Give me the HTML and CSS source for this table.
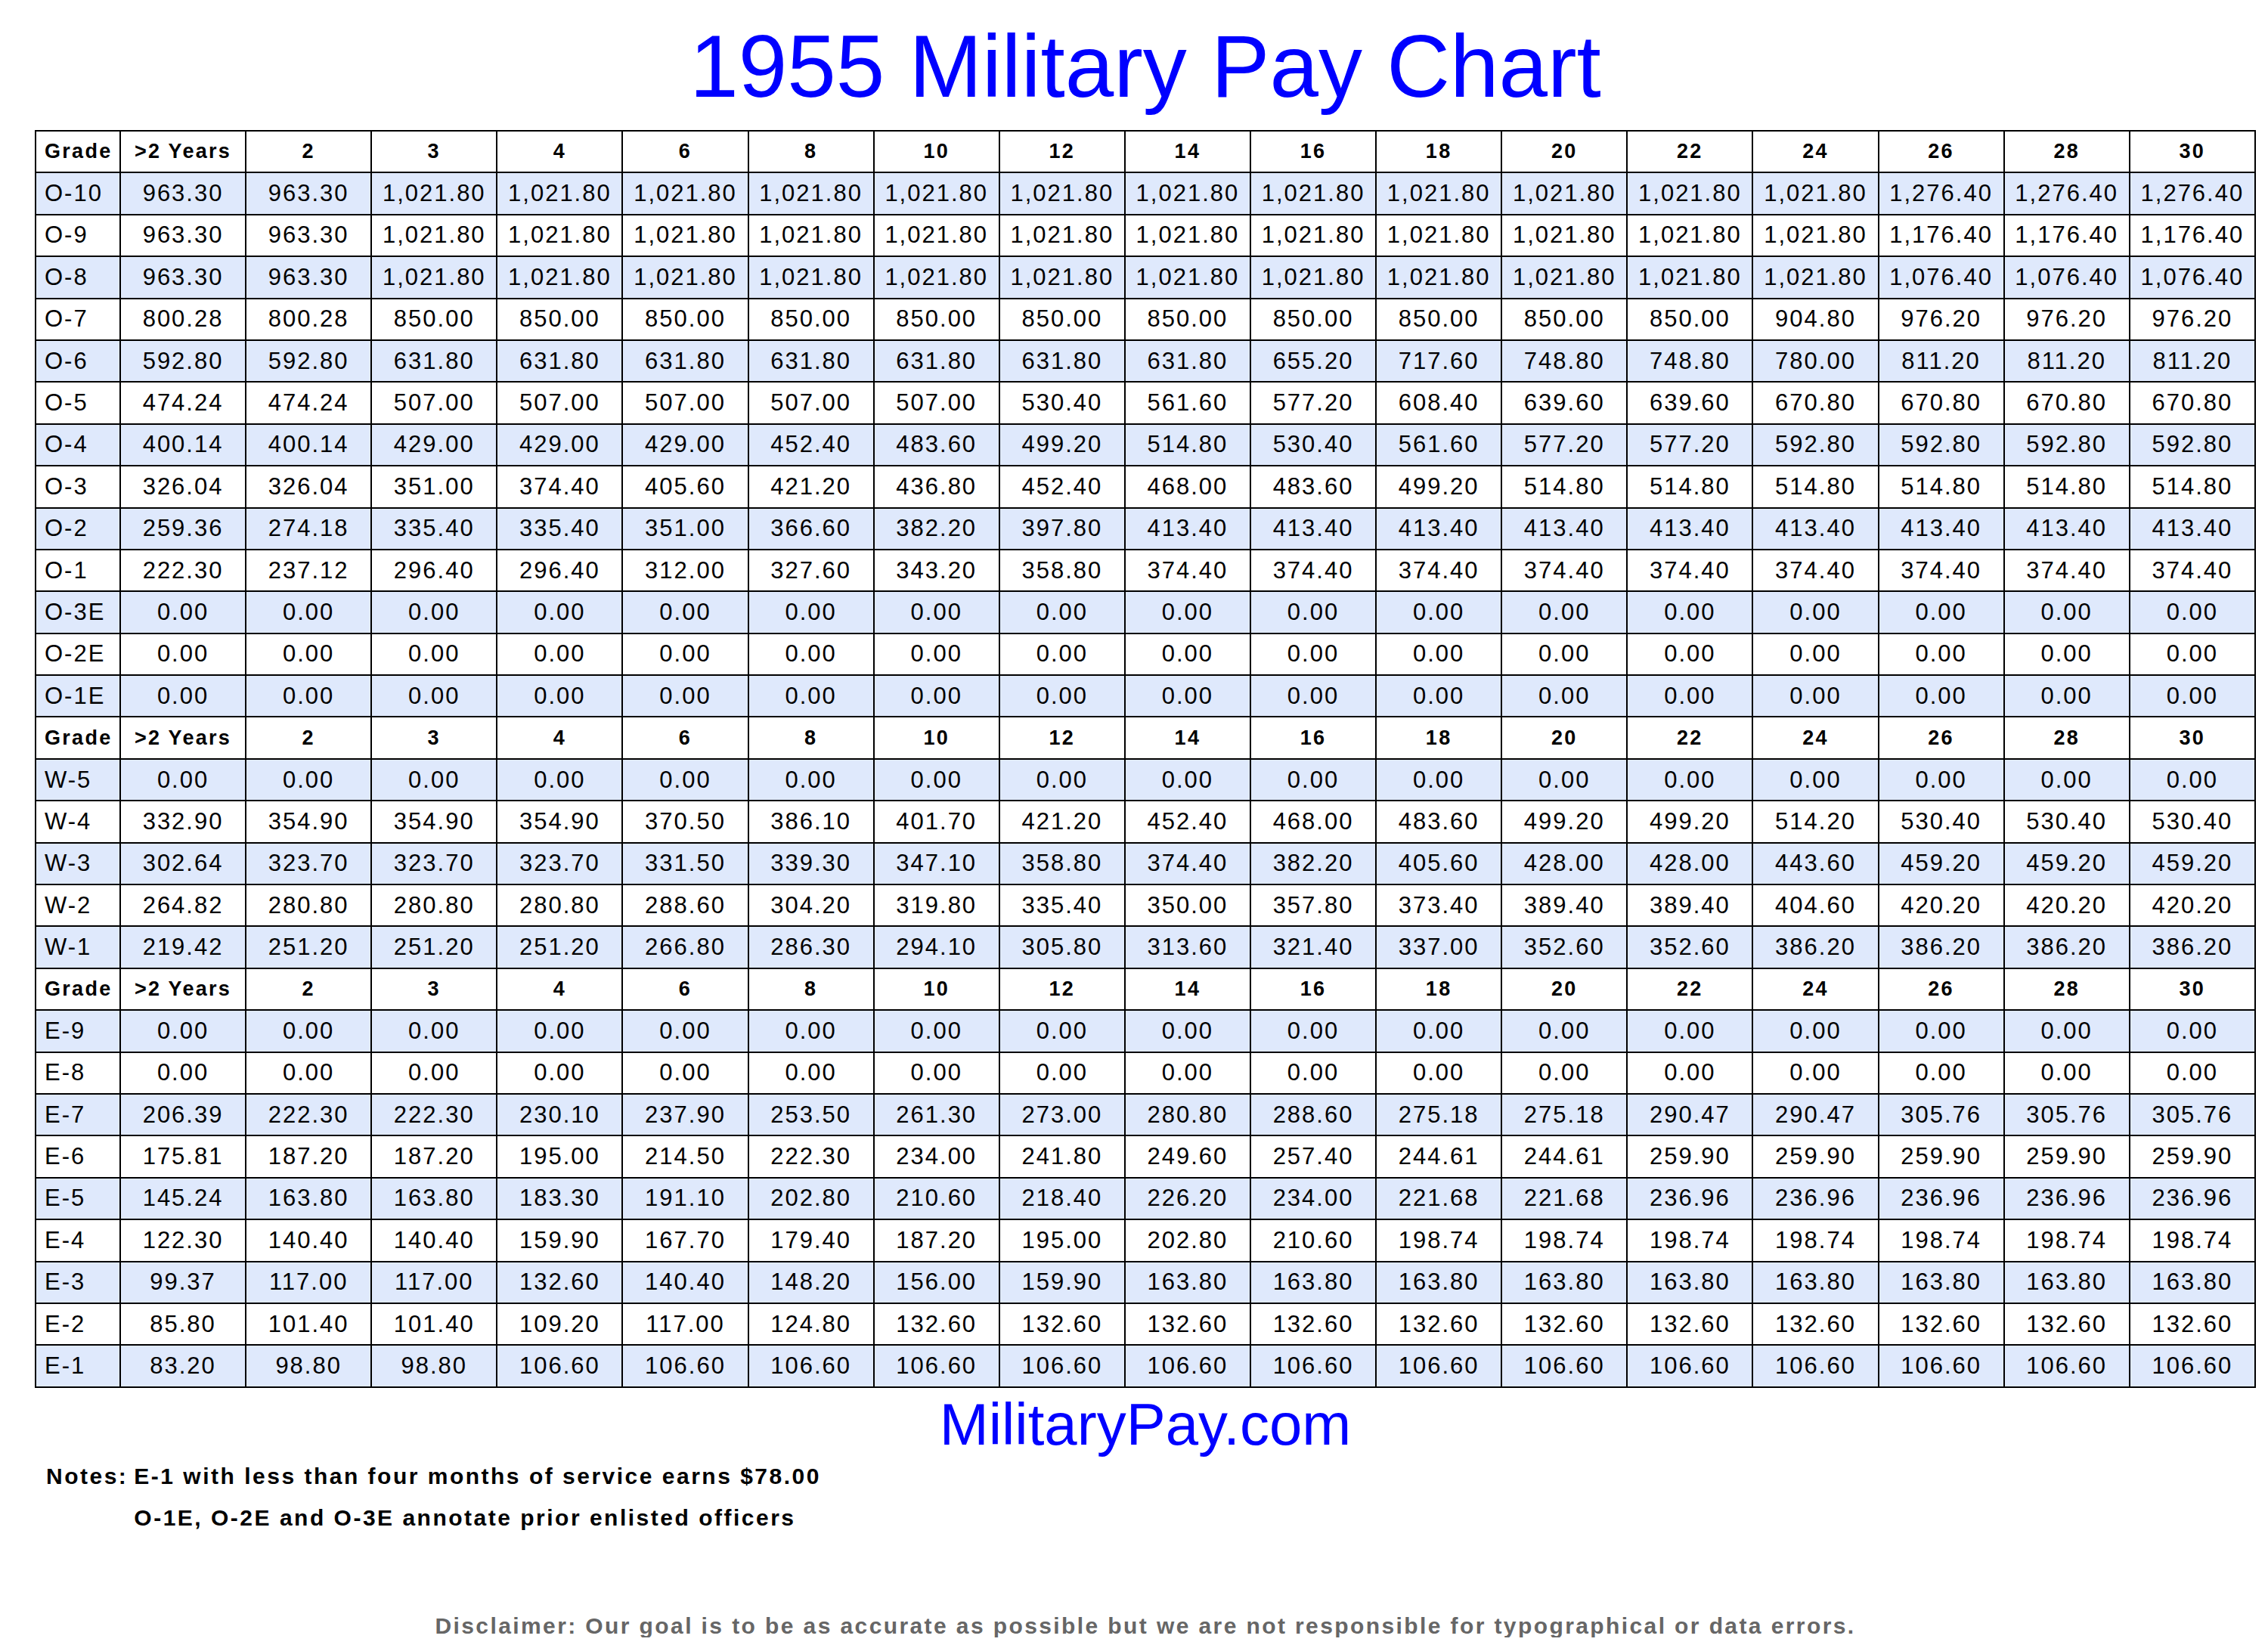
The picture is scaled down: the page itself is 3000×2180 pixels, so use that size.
FILE: index.html
```html
<!DOCTYPE html>
<html lang="en">
<head>
<meta charset="utf-8">
<title>1955 Military Pay Chart</title>
<link rel="stylesheet" href="styles.css">
</head>
<body>
<div class="page">
  <h1 class="title">1955 Military Pay Chart</h1>
  <table class="chart">
    <colgroup><col class="c-grade"><col span="17"></colgroup>
    <tbody>
      <tr class="head"><th>Grade</th><th>&gt;2 Years</th><th>2</th><th>3</th><th>4</th><th>6</th><th>8</th><th>10</th><th>12</th><th>14</th><th>16</th><th>18</th><th>20</th><th>22</th><th>24</th><th>26</th><th>28</th><th>30</th></tr>
      <tr><td>O-10</td><td>963.30</td><td>963.30</td><td>1,021.80</td><td>1,021.80</td><td>1,021.80</td><td>1,021.80</td><td>1,021.80</td><td>1,021.80</td><td>1,021.80</td><td>1,021.80</td><td>1,021.80</td><td>1,021.80</td><td>1,021.80</td><td>1,021.80</td><td>1,276.40</td><td>1,276.40</td><td>1,276.40</td></tr>
      <tr><td>O-9</td><td>963.30</td><td>963.30</td><td>1,021.80</td><td>1,021.80</td><td>1,021.80</td><td>1,021.80</td><td>1,021.80</td><td>1,021.80</td><td>1,021.80</td><td>1,021.80</td><td>1,021.80</td><td>1,021.80</td><td>1,021.80</td><td>1,021.80</td><td>1,176.40</td><td>1,176.40</td><td>1,176.40</td></tr>
      <tr><td>O-8</td><td>963.30</td><td>963.30</td><td>1,021.80</td><td>1,021.80</td><td>1,021.80</td><td>1,021.80</td><td>1,021.80</td><td>1,021.80</td><td>1,021.80</td><td>1,021.80</td><td>1,021.80</td><td>1,021.80</td><td>1,021.80</td><td>1,021.80</td><td>1,076.40</td><td>1,076.40</td><td>1,076.40</td></tr>
      <tr><td>O-7</td><td>800.28</td><td>800.28</td><td>850.00</td><td>850.00</td><td>850.00</td><td>850.00</td><td>850.00</td><td>850.00</td><td>850.00</td><td>850.00</td><td>850.00</td><td>850.00</td><td>850.00</td><td>904.80</td><td>976.20</td><td>976.20</td><td>976.20</td></tr>
      <tr><td>O-6</td><td>592.80</td><td>592.80</td><td>631.80</td><td>631.80</td><td>631.80</td><td>631.80</td><td>631.80</td><td>631.80</td><td>631.80</td><td>655.20</td><td>717.60</td><td>748.80</td><td>748.80</td><td>780.00</td><td>811.20</td><td>811.20</td><td>811.20</td></tr>
      <tr><td>O-5</td><td>474.24</td><td>474.24</td><td>507.00</td><td>507.00</td><td>507.00</td><td>507.00</td><td>507.00</td><td>530.40</td><td>561.60</td><td>577.20</td><td>608.40</td><td>639.60</td><td>639.60</td><td>670.80</td><td>670.80</td><td>670.80</td><td>670.80</td></tr>
      <tr><td>O-4</td><td>400.14</td><td>400.14</td><td>429.00</td><td>429.00</td><td>429.00</td><td>452.40</td><td>483.60</td><td>499.20</td><td>514.80</td><td>530.40</td><td>561.60</td><td>577.20</td><td>577.20</td><td>592.80</td><td>592.80</td><td>592.80</td><td>592.80</td></tr>
      <tr><td>O-3</td><td>326.04</td><td>326.04</td><td>351.00</td><td>374.40</td><td>405.60</td><td>421.20</td><td>436.80</td><td>452.40</td><td>468.00</td><td>483.60</td><td>499.20</td><td>514.80</td><td>514.80</td><td>514.80</td><td>514.80</td><td>514.80</td><td>514.80</td></tr>
      <tr><td>O-2</td><td>259.36</td><td>274.18</td><td>335.40</td><td>335.40</td><td>351.00</td><td>366.60</td><td>382.20</td><td>397.80</td><td>413.40</td><td>413.40</td><td>413.40</td><td>413.40</td><td>413.40</td><td>413.40</td><td>413.40</td><td>413.40</td><td>413.40</td></tr>
      <tr><td>O-1</td><td>222.30</td><td>237.12</td><td>296.40</td><td>296.40</td><td>312.00</td><td>327.60</td><td>343.20</td><td>358.80</td><td>374.40</td><td>374.40</td><td>374.40</td><td>374.40</td><td>374.40</td><td>374.40</td><td>374.40</td><td>374.40</td><td>374.40</td></tr>
      <tr><td>O-3E</td><td>0.00</td><td>0.00</td><td>0.00</td><td>0.00</td><td>0.00</td><td>0.00</td><td>0.00</td><td>0.00</td><td>0.00</td><td>0.00</td><td>0.00</td><td>0.00</td><td>0.00</td><td>0.00</td><td>0.00</td><td>0.00</td><td>0.00</td></tr>
      <tr><td>O-2E</td><td>0.00</td><td>0.00</td><td>0.00</td><td>0.00</td><td>0.00</td><td>0.00</td><td>0.00</td><td>0.00</td><td>0.00</td><td>0.00</td><td>0.00</td><td>0.00</td><td>0.00</td><td>0.00</td><td>0.00</td><td>0.00</td><td>0.00</td></tr>
      <tr><td>O-1E</td><td>0.00</td><td>0.00</td><td>0.00</td><td>0.00</td><td>0.00</td><td>0.00</td><td>0.00</td><td>0.00</td><td>0.00</td><td>0.00</td><td>0.00</td><td>0.00</td><td>0.00</td><td>0.00</td><td>0.00</td><td>0.00</td><td>0.00</td></tr>
    </tbody>
    <tbody>
      <tr class="head"><th>Grade</th><th>&gt;2 Years</th><th>2</th><th>3</th><th>4</th><th>6</th><th>8</th><th>10</th><th>12</th><th>14</th><th>16</th><th>18</th><th>20</th><th>22</th><th>24</th><th>26</th><th>28</th><th>30</th></tr>
      <tr><td>W-5</td><td>0.00</td><td>0.00</td><td>0.00</td><td>0.00</td><td>0.00</td><td>0.00</td><td>0.00</td><td>0.00</td><td>0.00</td><td>0.00</td><td>0.00</td><td>0.00</td><td>0.00</td><td>0.00</td><td>0.00</td><td>0.00</td><td>0.00</td></tr>
      <tr><td>W-4</td><td>332.90</td><td>354.90</td><td>354.90</td><td>354.90</td><td>370.50</td><td>386.10</td><td>401.70</td><td>421.20</td><td>452.40</td><td>468.00</td><td>483.60</td><td>499.20</td><td>499.20</td><td>514.20</td><td>530.40</td><td>530.40</td><td>530.40</td></tr>
      <tr><td>W-3</td><td>302.64</td><td>323.70</td><td>323.70</td><td>323.70</td><td>331.50</td><td>339.30</td><td>347.10</td><td>358.80</td><td>374.40</td><td>382.20</td><td>405.60</td><td>428.00</td><td>428.00</td><td>443.60</td><td>459.20</td><td>459.20</td><td>459.20</td></tr>
      <tr><td>W-2</td><td>264.82</td><td>280.80</td><td>280.80</td><td>280.80</td><td>288.60</td><td>304.20</td><td>319.80</td><td>335.40</td><td>350.00</td><td>357.80</td><td>373.40</td><td>389.40</td><td>389.40</td><td>404.60</td><td>420.20</td><td>420.20</td><td>420.20</td></tr>
      <tr><td>W-1</td><td>219.42</td><td>251.20</td><td>251.20</td><td>251.20</td><td>266.80</td><td>286.30</td><td>294.10</td><td>305.80</td><td>313.60</td><td>321.40</td><td>337.00</td><td>352.60</td><td>352.60</td><td>386.20</td><td>386.20</td><td>386.20</td><td>386.20</td></tr>
    </tbody>
    <tbody>
      <tr class="head"><th>Grade</th><th>&gt;2 Years</th><th>2</th><th>3</th><th>4</th><th>6</th><th>8</th><th>10</th><th>12</th><th>14</th><th>16</th><th>18</th><th>20</th><th>22</th><th>24</th><th>26</th><th>28</th><th>30</th></tr>
      <tr><td>E-9</td><td>0.00</td><td>0.00</td><td>0.00</td><td>0.00</td><td>0.00</td><td>0.00</td><td>0.00</td><td>0.00</td><td>0.00</td><td>0.00</td><td>0.00</td><td>0.00</td><td>0.00</td><td>0.00</td><td>0.00</td><td>0.00</td><td>0.00</td></tr>
      <tr><td>E-8</td><td>0.00</td><td>0.00</td><td>0.00</td><td>0.00</td><td>0.00</td><td>0.00</td><td>0.00</td><td>0.00</td><td>0.00</td><td>0.00</td><td>0.00</td><td>0.00</td><td>0.00</td><td>0.00</td><td>0.00</td><td>0.00</td><td>0.00</td></tr>
      <tr><td>E-7</td><td>206.39</td><td>222.30</td><td>222.30</td><td>230.10</td><td>237.90</td><td>253.50</td><td>261.30</td><td>273.00</td><td>280.80</td><td>288.60</td><td>275.18</td><td>275.18</td><td>290.47</td><td>290.47</td><td>305.76</td><td>305.76</td><td>305.76</td></tr>
      <tr><td>E-6</td><td>175.81</td><td>187.20</td><td>187.20</td><td>195.00</td><td>214.50</td><td>222.30</td><td>234.00</td><td>241.80</td><td>249.60</td><td>257.40</td><td>244.61</td><td>244.61</td><td>259.90</td><td>259.90</td><td>259.90</td><td>259.90</td><td>259.90</td></tr>
      <tr><td>E-5</td><td>145.24</td><td>163.80</td><td>163.80</td><td>183.30</td><td>191.10</td><td>202.80</td><td>210.60</td><td>218.40</td><td>226.20</td><td>234.00</td><td>221.68</td><td>221.68</td><td>236.96</td><td>236.96</td><td>236.96</td><td>236.96</td><td>236.96</td></tr>
      <tr><td>E-4</td><td>122.30</td><td>140.40</td><td>140.40</td><td>159.90</td><td>167.70</td><td>179.40</td><td>187.20</td><td>195.00</td><td>202.80</td><td>210.60</td><td>198.74</td><td>198.74</td><td>198.74</td><td>198.74</td><td>198.74</td><td>198.74</td><td>198.74</td></tr>
      <tr><td>E-3</td><td>99.37</td><td>117.00</td><td>117.00</td><td>132.60</td><td>140.40</td><td>148.20</td><td>156.00</td><td>159.90</td><td>163.80</td><td>163.80</td><td>163.80</td><td>163.80</td><td>163.80</td><td>163.80</td><td>163.80</td><td>163.80</td><td>163.80</td></tr>
      <tr><td>E-2</td><td>85.80</td><td>101.40</td><td>101.40</td><td>109.20</td><td>117.00</td><td>124.80</td><td>132.60</td><td>132.60</td><td>132.60</td><td>132.60</td><td>132.60</td><td>132.60</td><td>132.60</td><td>132.60</td><td>132.60</td><td>132.60</td><td>132.60</td></tr>
      <tr><td>E-1</td><td>83.20</td><td>98.80</td><td>98.80</td><td>106.60</td><td>106.60</td><td>106.60</td><td>106.60</td><td>106.60</td><td>106.60</td><td>106.60</td><td>106.60</td><td>106.60</td><td>106.60</td><td>106.60</td><td>106.60</td><td>106.60</td><td>106.60</td></tr>
    </tbody>
  </table>
  <div class="site">MilitaryPay.com</div>
  <div class="notes">
    <span class="notes-label">Notes:</span>
    <div class="notes-lines">
      <div>E-1 with less than four months of service earns $78.00</div>
      <div>O-1E, O-2E and O-3E annotate prior enlisted officers</div>
    </div>
  </div>
  <div class="disclaimer">Disclaimer: Our goal is to be as accurate as possible but we are not responsible for typographical or data errors.</div>
</div>
</body>
</html>
```

FILE: styles.css
```css
html, body {
  margin: 0;
  padding: 0;
  background: #ffffff;
}

body {
  font-family: "Liberation Sans", Arial, sans-serif;
  color: #000000;
}

.page {
  width: 2938px;
  padding: 30px 0 0 46px;
}

.title {
  margin: 0 0 26px;
  font-size: 116px;
  font-weight: normal;
  line-height: 1;
  text-align: center;
  color: #0000ff;
}

.chart {
  width: 2938px;
  table-layout: fixed;
  border-collapse: collapse;
  border: 2px solid #000;
}

.c-grade {
  width: 112px;
}

.chart th,
.chart td {
  height: 53.4px;
  padding: 0;
  border: 2px solid #000;
  text-align: center;
  vertical-align: middle;
  white-space: nowrap;
  overflow: hidden;
}

.chart th {
  font-size: 27px;
  font-weight: bold;
  letter-spacing: 2.3px;
}

.chart td {
  font-size: 31px;
  letter-spacing: 2px;
}

.chart th:first-child,
.chart td:first-child {
  text-align: left;
  padding-left: 11px;
}

.chart tbody tr:nth-child(even) {
  background: #dfe9fc;
}

.site {
  margin-top: 9px;
  font-size: 78px;
  line-height: 1;
  text-align: center;
  color: #0000ff;
}

.notes {
  display: flex;
  margin: 2px 0 0 15px;
  font-size: 30px;
  font-weight: bold;
  line-height: 55px;
  letter-spacing: 2.5px;
}

.notes-label {
  margin-right: 8px;
}

.disclaimer {
  margin-top: 101px;
  font-size: 30px;
  font-weight: bold;
  line-height: 1;
  letter-spacing: 2.4px;
  text-align: center;
  color: #666666;
}
```
